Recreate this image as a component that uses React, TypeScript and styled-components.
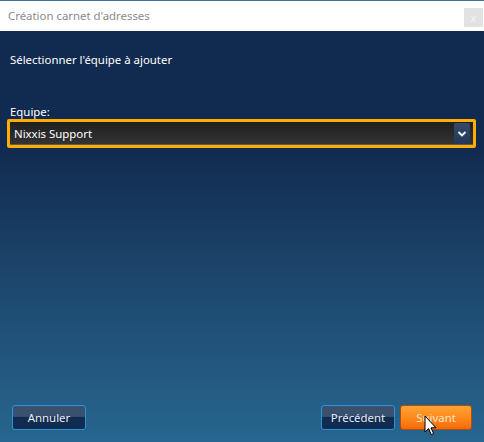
import React from "react";
import styled, { createGlobalStyle } from "styled-components";

const Global = createGlobalStyle`
  html, body { margin: 0; padding: 0; }
  body { width: 484px; height: 442px; overflow: hidden; font-family: "Noto Sans", "Open Sans", sans-serif; }
`;

const Window = styled.div`
  position: relative;
  width: 484px;
  height: 442px;
  display: flex;
  flex-direction: column;
  overflow: hidden;
`;

const TitleBar = styled.div`
  height: 30px;
  border-top: 1px solid #3f7296;
  background: #ffffff;
  display: flex;
  align-items: center;
  justify-content: space-between;
  padding: 0 1px 0 8px;
  box-sizing: content-box;
`;

const Title = styled.span`
  font-size: 11.4px;
  color: #8a8a8a;
  margin-top: -1px;
`;

const CloseButton = styled.div`
  width: 19px;
  height: 19px;
  background: #e2e2e2;
  color: #f4f4f4;
  font-size: 11px;
  display: flex;
  align-items: center;
  justify-content: center;
  margin-top: 3px;
`;

const Body = styled.div`
  flex: 1;
  display: flex;
  flex-direction: column;
  background: linear-gradient(180deg, #112a4f 0%, #112a4f 28%, #1b4268 55%, #27668f 100%);
  padding: 21px 8px 12px 8px;
`;

const Instruction = styled.div`
  font-size: 11.4px;
  color: #ffffff;
  padding-left: 2px;
`;

const Field = styled.div`
  margin-top: 38px;
  display: flex;
  flex-direction: column;
`;

const Label = styled.div`
  font-size: 11.4px;
  color: #ffffff;
  padding-left: 2px;
  line-height: 14px;
`;

const Select = styled.div`
  margin-left: -1px;
  width: 463px;
  height: 23px;
  border: 3px solid #ffad00;
  border-radius: 2px;
  background: linear-gradient(180deg, #1f1f1f 0%, #2c2c2c 60%, #343434 100%);
  box-shadow: inset 0 -1px 0 #5a5a5a;
  display: flex;
  align-items: center;
  justify-content: space-between;
`;

const SelectText = styled.span`
  font-size: 11.4px;
  color: #ffffff;
  padding-left: 4px;
`;

const DropButton = styled.div`
  width: 16px;
  height: 21px;
  margin-right: 3px;
  background: linear-gradient(180deg, #34496b 0%, #22375a 100%);
  border-radius: 2px;
  display: flex;
  align-items: center;
  justify-content: center;
`;

const Spacer = styled.div`
  flex: 1;
`;

const Footer = styled.div`
  display: flex;
  align-items: center;
  gap: 5px;
  padding-left: 4px;
  padding-right: 4px;
`;

const BaseButton = styled.div`
  box-sizing: border-box;
  height: 25px;
  font-size: 11.4px;
  display: flex;
  align-items: center;
  justify-content: center;
  border-radius: 3px;
`;

const BlueButton = styled(BaseButton)<{ $w: number }>`
  width: ${(p) => p.$w}px;
  border: 1px solid #2b93d6;
  color: #e6eef6;
  background: linear-gradient(180deg, #3a506f 0%, #3a506f 45%, #122b50 50%, #122b50 100%);
`;

const OrangeButton = styled(BaseButton)<{ $w: number }>`
  width: ${(p) => p.$w}px;
  border: 1px solid #b84b0a;
  color: #fde3c7;
  background: linear-gradient(180deg, #ffa333 0%, #fd8a1c 50%, #f46a0c 100%);
`;

const Cursor = styled.svg`
  position: absolute;
  left: 424px;
  top: 415px;
`;

export default function App() {
  return (
    <>
      <Global />
      <Window>
        <TitleBar>
          <Title>Création carnet d'adresses</Title>
          <CloseButton>x</CloseButton>
        </TitleBar>
        <Body>
          <Instruction>Sélectionner l'équipe à ajouter</Instruction>
          <Field>
            <Label>Equipe:</Label>
            <Select>
              <SelectText>Nixxis Support</SelectText>
              <DropButton>
                <svg width="10" height="8" viewBox="0 0 10 8">
                  <path d="M1.5 2 L5 5.5 L8.5 2" fill="none" stroke="#ffffff" strokeWidth="1.8" />
                </svg>
              </DropButton>
            </Select>
          </Field>
          <Spacer />
          <Footer>
            <BlueButton $w={74}>Annuler</BlueButton>
            <Spacer />
            <BlueButton $w={74}>Précédent</BlueButton>
            <OrangeButton $w={72}>Suivant</OrangeButton>
          </Footer>
        </Body>
        <Cursor width="14" height="22" viewBox="0 0 14 22">
          <path d="M1 1 L1 17 L4.6 13.6 L7.2 19.6 L9.6 18.6 L7 12.8 L12 12.8 Z" fill="#ffffff" stroke="#000000" strokeWidth="1" strokeLinejoin="round" />
        </Cursor>
      </Window>
    </>
  );
}
